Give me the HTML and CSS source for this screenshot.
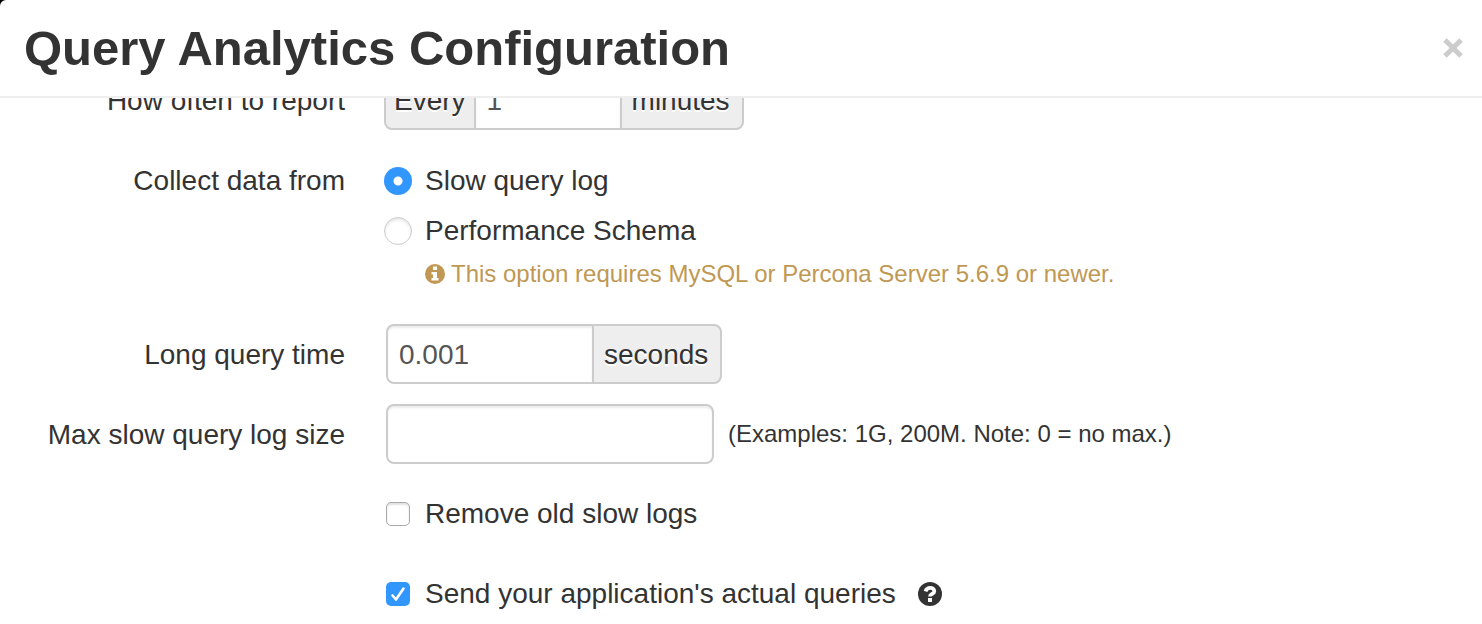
FILE: index.html
```html
<!DOCTYPE html>
<html lang="en">
<head>
<meta charset="utf-8">
<title>Query Analytics Configuration</title>
<link rel="stylesheet" href="styles.css">
</head>
<body>
<div class="modal" role="dialog" aria-labelledby="modal-title">
  <header class="modal-header">
    <h1 class="modal-title" id="modal-title">Query Analytics Configuration</h1>
    <button class="close" type="button" aria-label="Close">
      <svg width="20" height="20" viewBox="0 0 20 20" aria-hidden="true"><path d="M2 2 18 18M18 2 2 18" fill="none" stroke="currentColor" stroke-width="5"/></svg>
    </button>
  </header>
  <main class="modal-body">
    <form class="form">
      <div class="row">
        <label class="row-label" for="interval">How often to report</label>
        <div class="controls">
          <div class="input-group">
            <span class="addon">Every</span>
            <input class="input input-short" id="interval" type="text" value="1">
            <span class="addon">minutes</span>
          </div>
        </div>
      </div>
      <div class="row" role="radiogroup" aria-labelledby="source-label">
        <span class="row-label" id="source-label">Collect data from</span>
        <div class="controls options">
          <label class="option"><input class="radio" type="radio" name="source" checked>Slow query log</label>
          <label class="option"><input class="radio" type="radio" name="source">Performance Schema</label>
          <p class="hint">
            <svg class="hint-icon" width="20" height="20" viewBox="0 0 20 20" aria-hidden="true"><circle cx="10" cy="10" r="10" fill="currentColor"/><path d="M8 2.500h4v3.500H8zM6.500 8H12v6h1.500v2.500h-7V14H8v-3.500H6.500z" fill="#fff"/></svg>
            <span>This option requires MySQL or Percona Server 5.6.9 or newer.</span>
          </p>
        </div>
      </div>
      <div class="row">
        <label class="row-label" for="query-time">Long query time</label>
        <div class="controls inset">
          <div class="input-group">
            <input class="input input-medium" id="query-time" type="text" value="0.001">
            <span class="addon">seconds</span>
          </div>
        </div>
      </div>
      <div class="row">
        <label class="row-label" for="log-size">Max slow query log size</label>
        <div class="controls inset">
          <input class="input input-long" id="log-size" type="text" aria-describedby="log-size-help">
          <span class="help" id="log-size-help">(Examples: 1G, 200M. Note: 0 = no max.)</span>
        </div>
      </div>
      <div class="row">
        <div class="controls inset">
          <label class="option"><span class="check"><input class="checkbox" type="checkbox"></span>Remove old slow logs</label>
        </div>
      </div>
      <div class="row">
        <div class="controls inset">
          <label class="option"><span class="check"><input class="checkbox" type="checkbox" checked><svg class="tick" width="24" height="24" viewBox="0 0 24 24" aria-hidden="true"><path d="M6.500 13.500 10 17.500 17.500 6.500" fill="none" stroke="#fff" stroke-width="2.600" stroke-linecap="round" stroke-linejoin="round"/></svg></span>Send your application's actual queries</label>
          <button class="help-button" type="button" aria-label="Help">
            <svg width="24" height="24" viewBox="0 0 24 24" aria-hidden="true"><circle cx="12" cy="12" r="12" fill="currentColor"/><path d="M7.500 9.300C8.300 7.100 9.800 5.900 12.100 5.900c2.400 0 4.200 1.300 4.200 3.300 0 2.800-4.300 2.700-4.300 5.300" fill="none" stroke="#fff" stroke-width="3.800"/><path d="M10 16h4v4h-4z" fill="#fff"/></svg>
          </button>
        </div>
      </div>
    </form>
  </main>
</div>
</body>
</html>
```

FILE: styles.css
```css
* {
  box-sizing: border-box;
}

body {
  margin: 0;
  background: #000;
  color: #333;
  font-family: "Liberation Sans", Arial, sans-serif;
  font-size: 28px;
  line-height: 42px;
}

.modal {
  display: flex;
  flex-direction: column;
  height: 100vh;
  background: #fff;
  border-top-left-radius: 6px;
  overflow: hidden;
}

.modal-header {
  display: flex;
  align-items: center;
  justify-content: space-between;
  padding: 18px 19px 18px 24px;
  border-bottom: 2px solid #eee;
}

.modal-title {
  margin: 0;
  font-size: 49px;
  line-height: 60px;
  font-weight: bold;
}

.close,
.help-button {
  display: flex;
  padding: 0;
  border: 0;
  background: none;
  color: #ccc;
  cursor: pointer;
}

.help-button {
  margin-left: 22px;
  color: #333;
}

.modal-body {
  flex: 1;
  min-height: 0;
  overflow: hidden;
}

/* The form is scrolled slightly under the header. */
.form {
  display: flex;
  flex-direction: column;
  gap: 20px;
  margin-top: -28px;
}

.row {
  display: grid;
  grid-template-columns: 345px 1fr;
  column-gap: 39px;
}

.row-label {
  padding: 10px 0 8px;
  text-align: right;
  white-space: nowrap;
}

.controls {
  grid-column: 2;
  display: flex;
  align-items: center;
  min-height: 60px;
}

.inset {
  padding-left: 2px;
}

.options {
  flex-direction: column;
  align-items: flex-start;
  gap: 8px;
  padding: 10px 0 9px;
}

.option {
  display: flex;
  align-items: center;
}

.input-group {
  display: flex;
}

.input {
  height: 60px;
  padding: 8px 11px 6px;
  border: 2px solid #ccc;
  border-radius: 8px;
  background: #fff;
  box-shadow: inset 0 2px 2px rgba(0, 0, 0, 0.075);
  color: #555;
  font: inherit;
}

.input-short {
  width: 148px;
}

.input-medium {
  width: 208px;
}

.input-long {
  width: 328px;
}

.addon {
  padding: 8px 8px 6px;
  border: 2px solid #ccc;
  border-radius: 8px;
  background: #eee;
  text-shadow: 0 2px 0 #fff;
}

.addon:last-child {
  padding-left: 10px;
  padding-right: 12px;
}

.input-group > :not(:first-child) {
  margin-left: -2px;
  border-top-left-radius: 0;
  border-bottom-left-radius: 0;
}

.input-group > :not(:last-child) {
  border-top-right-radius: 0;
  border-bottom-right-radius: 0;
}

.radio,
.checkbox {
  appearance: none;
  flex: none;
  margin: 0;
  background: #fff;
}

.radio {
  width: 28px;
  height: 28px;
  margin-right: 13px;
  border: 1px solid #ccc;
  border-radius: 50%;
  box-shadow: inset 0 2px 3px rgba(0, 0, 0, 0.1);
}

.radio:checked {
  border: 0;
  background: radial-gradient(circle, #fff 4px, #3296ff 5px);
  box-shadow: none;
}

.check {
  display: grid;
  margin-right: 15px;
}

.check > * {
  grid-area: 1 / 1;
}

.checkbox {
  width: 24px;
  height: 24px;
  border: 1px solid #aaa;
  border-radius: 5px;
  box-shadow: inset 0 2px 2px rgba(0, 0, 0, 0.12);
}

.checkbox:checked {
  border: 0;
  background: #3296ff;
  box-shadow: none;
}

.tick {
  pointer-events: none;
}

.hint {
  display: flex;
  align-items: center;
  gap: 6px;
  margin: -7px 0 0 41px;
  color: #c09853;
  font-size: 24px;
}

.hint-icon {
  flex: none;
}

.help {
  margin-left: 14px;
  font-size: 24px;
}
```
